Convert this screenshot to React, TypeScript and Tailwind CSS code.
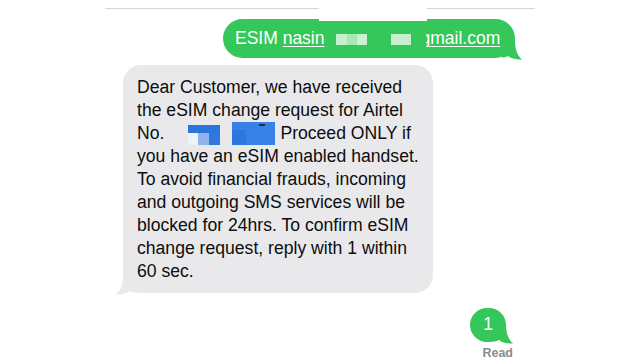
import React from "react";

function Tail({ color, side }: { color: string; side: "left" | "right" }) {
  const cls =
    side === "right"
      ? "absolute right-[-7px] bottom-[-2px]"
      : "absolute left-[-7px] bottom-[-2px] -scale-x-100";
  return (
    <svg className={cls} width="20" height="20" viewBox="0 0 20 20">
      <path d="M0 0 L13 0 C13 9 15 15 20 19.5 C14 19.8 9 18.5 6 16 C4 17 2 17.5 0 17.5 Z" fill={color} />
    </svg>
  );
}

export default function App() {
  return (
    <div className="w-[640px] h-[360px] bg-white overflow-hidden relative font-['Liberation_Sans','Arial',sans-serif]">
      <div className="flex flex-col pt-2">
        <div className="mx-[105px] h-px bg-[#d6d6da]" />

        <div className="flex justify-end pr-[125px] mt-[10px]">
          <div className="relative h-[39px] w-[292px] rounded-[20px] bg-[#35c759] pl-[12px] flex items-center text-white text-[17.5px] leading-none whitespace-nowrap">
            <span>ESIM&nbsp;</span>
            <span className="underline underline-offset-2 decoration-1">nasin</span>
            <span className="inline-flex ml-[11px] h-[11px] mt-[1px]">
              <span className="w-[11px] h-full bg-[#c6efcd]" />
              <span className="w-[10px] h-full bg-[#a9e7b4]" />
              <span className="w-[10px] h-full bg-[#cbf1d1]" />
            </span>
            <span className="inline-flex ml-[24px] h-[11px] mt-[1px]">
              <span className="w-[20px] h-full bg-[#c8f0ce]" />
            </span>
            <span className="inline-block ml-[15px] w-[79px] overflow-hidden">
              <span className="inline-block ml-[-5px] underline underline-offset-2 decoration-1">gmail.com</span>
            </span>
            <Tail color="#35c759" side="right" />
          </div>
        </div>

        <div className="pl-[123px] mt-[7px]">
          <div className="relative w-[310px] h-[228px] rounded-[18px] bg-[#e9e9eb] pl-[14px] pt-[11px] text-[17.6px] leading-[23px] text-[#0d0d0d] whitespace-nowrap">
            <div>Dear Customer, we have received</div>
            <div>the eSIM change request for Airtel</div>
            <div className="flex items-center">
              <span>No.</span>
              <span className="relative ml-[24px] w-[32px] h-[20px] mt-[2px]">
                <span className="absolute left-0 top-0 w-[32px] h-[8px] bg-[#2c74de]" />
                <span className="absolute left-[10px] top-[8px] w-[22px] h-[12px] bg-[#2f78e0]" />
                <span className="absolute left-[10px] top-[8px] w-[11px] h-[12px] bg-[#8fb3ec]" />
                <span className="absolute left-0 top-[8px] w-[10px] h-[12px] bg-[#eef2f9]" />
              </span>
              <span className="relative ml-[12px] w-[43px] h-[23px] mt-[-1px]">
                <span className="absolute inset-0 bg-[#3680e6]" />
                <span className="absolute left-0 top-[8px] w-[14px] h-[15px] bg-[#2d76e0]" />
                <span className="absolute left-[27px] top-[2px] w-[6px] h-[2px] bg-[#1b2c4a]" />
              </span>
              <span className="ml-[5px]">Proceed ONLY if</span>
            </div>
            <div>you have an eSIM enabled handset.</div>
            <div>To avoid financial frauds, incoming</div>
            <div>and outgoing SMS services will be</div>
            <div>blocked for 24hrs. To confirm eSIM</div>
            <div>change request, reply with 1 within</div>
            <div>60 sec.</div>
            <Tail color="#e9e9eb" side="left" />
          </div>
        </div>

        <div className="flex justify-end pr-[134px] mt-[15px]">
          <div className="relative w-[36px] h-[34px] rounded-[17px] bg-[#35c759] flex items-center justify-center text-white text-[17.5px] leading-none">
            1
            <Tail color="#35c759" side="right" />
          </div>
        </div>

        <div className="flex justify-end pr-[127px] mt-[4px]">
          <span className="text-[12.5px] leading-[14px] font-semibold text-[#8a8a8f]">Read</span>
        </div>
      </div>

      <div className="absolute left-[319px] top-0 w-[108px] h-[21px] bg-white" />
    </div>
  );
}
